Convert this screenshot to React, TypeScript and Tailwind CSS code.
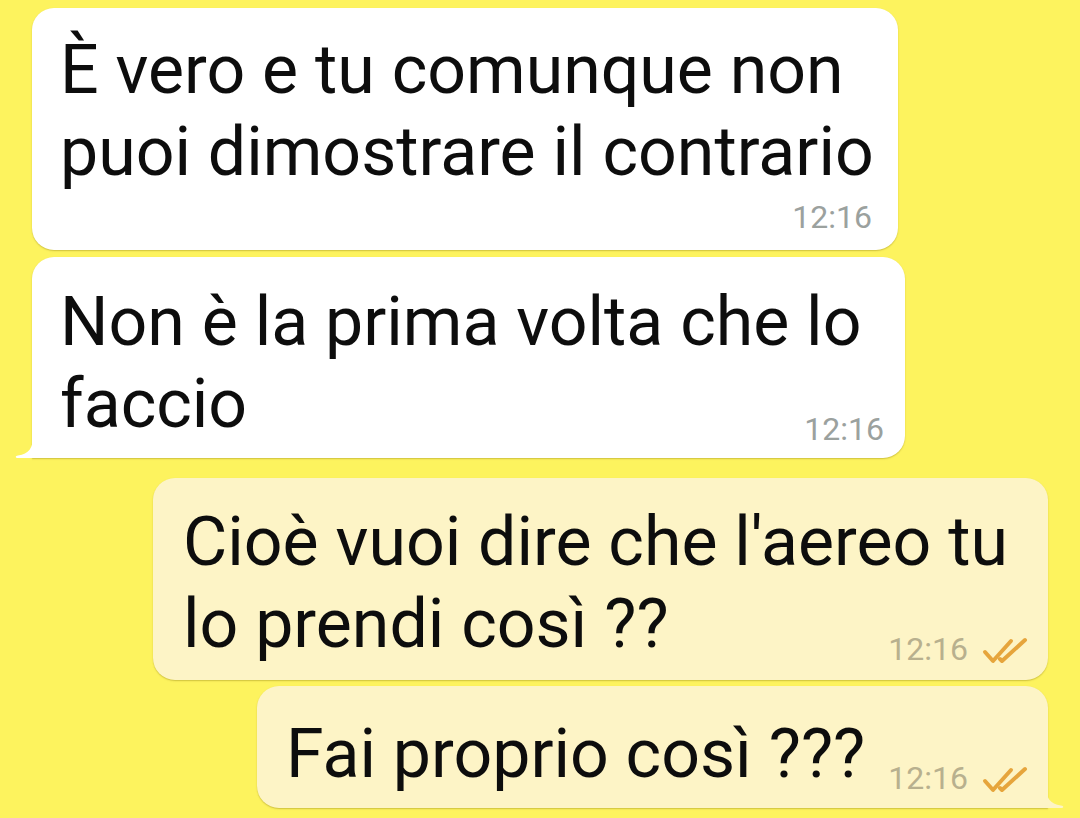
import React from "react";

const font = { fontFamily: "Roboto, 'Noto Sans', sans-serif" };

function Checks() {
  return (
    <svg width="46" height="28" viewBox="0 0 46 28" className="ml-[14px] mb-[2px]" fill="none">
      <path d="M3 15 L11 24 L29 4" stroke="#e6a53c" strokeWidth="4" strokeLinecap="round" strokeLinejoin="round" />
      <path d="M18 22 L20 24 L43 3" stroke="#e6a53c" strokeWidth="4" strokeLinecap="round" strokeLinejoin="round" />
    </svg>
  );
}

function TailLeft({ color }: { color: string }) {
  return (
    <svg width="19" height="22" viewBox="0 0 19 22" className="absolute left-[-17px] bottom-0">
      <path d="M18 0 C18 12 14 18 3 19.5 C0 20 0 22 3 22 L18 22 Z" fill={color} />
    </svg>
  );
}

function TailRight({ color }: { color: string }) {
  return (
    <svg width="19" height="22" viewBox="0 0 19 22" className="absolute right-[-16px] bottom-0">
      <path d="M1 0 C1 12 5 18 16 19.5 C19 20 19 22 16 22 L1 22 Z" fill={color} />
    </svg>
  );
}

export default function App() {
  return (
    <div className="w-[1080px] h-[818px] bg-[#fdf35e] overflow-hidden flex flex-col pt-[8px]" style={font}>
      {/* Bubble 1 */}
      <div className="ml-[32px] w-[866px] h-[242px] bg-white rounded-[22px] shadow-[0_1px_1.5px_rgba(120,100,0,0.35)] flex flex-col pt-[21px] pl-[28px] pr-[26px]">
        <div className="text-[68px] leading-[82px] text-[#0d0d0d] whitespace-nowrap">
          È vero e tu comunque non
          <br />
          puoi dimostrare il contrario
        </div>
        <div className="self-end mt-[6px] text-[32px] leading-[36px] text-[#9ba19e]">12:16</div>
      </div>

      {/* Bubble 2 */}
      <div className="relative mt-[7px] ml-[32px] w-[873px] h-[201px] bg-white rounded-[22px] rounded-bl-none shadow-[0_1px_1.5px_rgba(120,100,0,0.35)] flex flex-col pt-[24px] pl-[28px] pr-[21px]">
        <TailLeft color="#ffffff" />
        <div className="text-[68px] leading-[82px] text-[#0d0d0d] whitespace-nowrap">
          Non è la prima volta che lo
          <br />
          faccio
        </div>
        <div className="self-end -mt-[34px] text-[32px] leading-[36px] text-[#9ba19e]">12:16</div>
      </div>

      {/* Bubble 3 */}
      <div className="mt-[20px] ml-[153px] w-[895px] h-[202px] bg-[#fdf4c6] rounded-[22px] shadow-[0_1px_1.5px_rgba(120,100,0,0.35)] flex flex-col pt-[23px] pl-[30px] pr-[20px]">
        <div className="text-[68px] leading-[82px] text-[#0d0d0d] whitespace-nowrap">
          Cioè vuoi dire che l'aereo tu
          <br />
          lo prendi così ??
        </div>
        <div className="self-end -mt-[34px] flex items-end text-[32px] leading-[36px] text-[#b8b08e]">
          <span>12:16</span>
          <Checks />
        </div>
      </div>

      {/* Bubble 4 */}
      <div className="relative mt-[6px] ml-[257px] w-[791px] h-[122px] bg-[#fdf4c6] rounded-[22px] rounded-br-none shadow-[0_1px_1.5px_rgba(120,100,0,0.35)] flex pt-[27px] pl-[29px] pr-[20px]">
        <TailRight color="#fdf4c6" />
        <div className="text-[68px] leading-[82px] text-[#0d0d0d] whitespace-nowrap">Fai proprio così ???</div>
        <div className="ml-auto self-start mt-[47px] flex items-end text-[32px] leading-[36px] text-[#b8b08e]">
          <span>12:16</span>
          <Checks />
        </div>
      </div>
    </div>
  );
}
